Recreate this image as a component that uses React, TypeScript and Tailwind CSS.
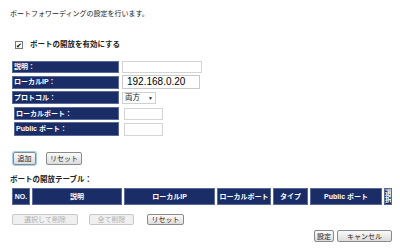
import React from "react"

const navy = "bg-[#1b2d66]"

function Label({ text, indent = false, h = "h-[13px]" }: { text: string; indent?: boolean; h?: string }) {
  return (
    <div
      className={`${navy} ${h} ${indent ? "ml-[4px] w-[105px]" : "ml-[2px] w-[107px]"} flex items-center border border-[#5a6a98] pl-[1px] font-bold text-white`}
    >
      {text}
    </div>
  )
}

function Btn({ children, className = "", disabled = false }: { children: React.ReactNode; className?: string; disabled?: boolean }) {
  return (
    <button
      disabled={disabled}
      className={`flex items-center justify-center rounded-[2px] border leading-none ${
        disabled
          ? "border-[#c8c8c8] bg-[#f0f0f0] text-[#b0b0b0]"
          : "border-[#8a8a8a] bg-gradient-to-b from-[#fafafa] to-[#dcdcdc] text-[#222]"
      } ${className}`}
    >
      {children}
    </button>
  )
}

export default function App() {
  const cols = [
    { label: "NO.", w: "w-[18px]" },
    { label: "説明", w: "w-[90px]" },
    { label: "ローカルIP", w: "w-[91px]" },
    { label: "ローカルポート", w: "w-[54px]" },
    { label: "タイプ", w: "w-[35px]" },
    { label: "Public ポート", w: "w-[72px]" },
  ]

  return (
    <div className="relative h-[249px] w-[400px] overflow-hidden bg-white font-['Liberation_Sans','Noto_Sans_CJK_JP',sans-serif] text-[7px] leading-[10px] text-[#222]">
      <p className="ml-[10px] mt-[9px]">ポートフォワーディングの設定を行います。</p>

      <div className="ml-[15px] mt-[21px] flex items-center gap-[7px]">
        <span className="flex h-[8px] w-[8px] items-center justify-center border border-[#777] bg-white text-[7px] leading-none text-black">
          ✔
        </span>
        <span className="font-bold text-[7.5px]">ポートの開放を有効にする</span>
      </div>

      <div className="ml-[10px] mt-[11px] flex flex-col">
        <div className="flex items-center">
          <Label text="説明：" h="h-[12px]" />
          <div className="ml-[3px] h-[12px] w-[80px] border border-[#d4d4d4]" />
        </div>
        <div className="mt-[2px] flex items-center">
          <Label text="ローカルIP：" />
          <div className="ml-[3px] flex h-[14px] w-[78px] items-center border border-[#c8c8c8] pl-[4px] text-[10px] text-black">
            192.168.0.20
          </div>
        </div>
        <div className="mt-[2px] flex items-center">
          <Label text="プロトコル：" />
          <div className="ml-[3px] flex h-[12px] w-[34px] items-center justify-between border border-[#d0d0d0] px-[2px] text-[7.5px]">
            <span>両方</span>
            <span className="text-[5px]">▼</span>
          </div>
        </div>
        <div className="mt-[3px] flex items-center">
          <Label text="ローカルポート：" indent />
          <div className="ml-[5px] h-[12px] w-[39px] border border-[#d4d4d4]" />
        </div>
        <div className="mt-[2px] flex items-center">
          <Label text="Public ポート：" indent h="h-[14px]" />
          <div className="ml-[5px] h-[13px] w-[39px] border border-[#d4d4d4]" />
        </div>
      </div>

      <div className="ml-[13px] mt-[16px] flex items-center gap-[10px]">
        <Btn className="h-[13px] w-[23px] border-[#4ba3dc] ring-1 ring-[#9fd0f0]">追加</Btn>
        <Btn className="h-[13px] w-[36px]">リセット</Btn>
      </div>

      <p className="ml-[10px] mt-[10px] font-bold text-[7.5px]">ポートの開放テーブル：</p>

      <div className="ml-[12px] mt-[3px] flex h-[17px] gap-[2px]">
        {cols.map((c) => (
          <div
            key={c.label}
            className={`${navy} ${c.w} flex items-center justify-center overflow-hidden border border-[#5a6a98] text-center font-bold leading-[8px] text-white`}
          >
            {c.label}
          </div>
        ))}
        <div className={`${navy} w-[8px] overflow-hidden border border-[#5a6a98] font-bold leading-[7px] text-white`}>
          <div className="w-[7px] break-all">選択</div>
        </div>
      </div>

      <div className="ml-[12px] mt-[9px] flex items-center">
        <Btn disabled className="h-[11px] w-[66px]">選択して削除</Btn>
        <Btn disabled className="ml-[11px] h-[11px] w-[45px]">全て削除</Btn>
        <Btn className="ml-[13px] h-[11px] w-[37px]">リセット</Btn>
      </div>

      <div className="mr-[8px] mt-[5px] flex justify-end gap-[3px]">
        <Btn className="h-[12px] w-[20px]">設定</Btn>
        <Btn className="h-[12px] w-[55px]">キャンセル</Btn>
      </div>
    </div>
  )
}
